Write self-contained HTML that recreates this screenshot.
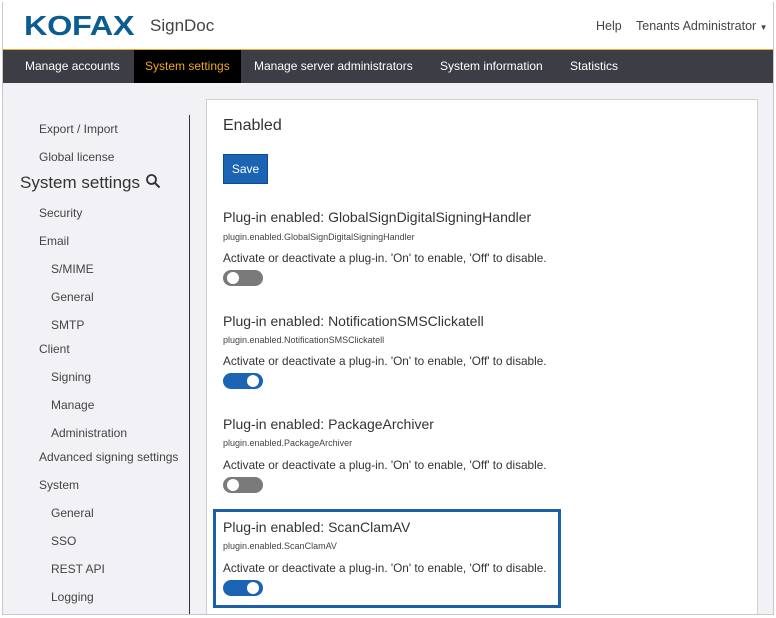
<!DOCTYPE html>
<html><head><style>
*{margin:0;padding:0;box-sizing:border-box}
body{width:776px;height:618px;background:#fff;font-family:"Liberation Sans","DejaVu Sans",sans-serif;position:relative;overflow:hidden;color:#333}
.frame{position:absolute;left:2px;top:2px;width:772px;height:613px;border:1px solid #c8c8c8;border-top:none;background:#f2f2f6;overflow:hidden}
.hdr{position:absolute;left:0;top:0;width:100%;height:47px;background:#fff}
.logo{position:absolute;left:21px;top:8px;font:900 28px "Liberation Sans",sans-serif;color:#0b5c91;letter-spacing:-0.3px;transform:scaleX(1.16);transform-origin:left}
.app{position:absolute;left:147px;top:14px;font-size:17px;color:#444}
.hr{position:absolute;top:17px;font-size:12.5px;color:#444}
.nav{position:absolute;left:0;top:47px;width:100%;height:34px;background:#3d3d45;border-top:1px solid #e3b22a}
.nav span{position:absolute;top:0;height:33px;line-height:33px;font-size:12px;color:#fff}
.nav .act{background:#000;color:#f0a623;padding:0 11px}
.side{position:absolute;font-size:12px;color:#444}
.vline{position:absolute;left:186px;top:113px;width:1px;height:510px;background:#333}
.panel{position:absolute;left:203px;top:97px;width:552px;height:530px;background:#fff;border:1px solid #d0d0d0}
.p{position:absolute;color:#333}
.t{font-size:14px}
.k{font-size:9px;color:#444}
.d{font-size:11.8px}
.tg{position:absolute;width:40px;height:16px;border-radius:8px}
.tg i{position:absolute;top:2px;width:12px;height:12px;border-radius:6px;background:#fff}
.off{background:#7a7a7a}.off i{left:4px}
.on{background:#1b64b4}.on i{left:24px}
.save{position:absolute;left:220px;top:152px;width:45px;height:30px;background:#1b64b4;border:1px solid #0f4c8e;color:#fff;font-size:12px;line-height:28px;text-align:center}
.hl{position:absolute;left:210px;top:507px;width:348px;height:99px;border:3px solid #1b5fa8}
</style></head><body>
<div class="frame">
<div class="hdr">
<div class="logo">KOFAX</div>
<div class="app">SignDoc</div>
<div class="hr" style="left:593px">Help</div>
<div class="hr" style="left:633px">Tenants Administrator <span style="font-size:8px">▼</span></div>
</div>
<div class="nav">
<span style="left:22px">Manage accounts</span>
<span class="act" style="left:131px">System settings</span>
<span style="left:251px">Manage server administrators</span>
<span style="left:437px">System information</span>
<span style="left:567px">Statistics</span>
</div>
<div class="side" style="left:36px;top:120px">Export / Import</div>
<div class="side" style="left:36px;top:148px">Global license</div>
<div class="side" style="left:17px;top:171px;font-size:17px;color:#333">System settings <svg width="16" height="16" viewBox="0 0 16 16" style="vertical-align:-1px"><circle cx="6.5" cy="6.5" r="4.5" fill="none" stroke="#333" stroke-width="1.8"/><path d="M10 10l4.5 4.5" stroke="#333" stroke-width="2"/></svg></div>
<div class="side" style="left:36px;top:204px">Security</div>
<div class="side" style="left:36px;top:232px">Email</div>
<div class="side" style="left:48px;top:260px">S/MIME</div>
<div class="side" style="left:48px;top:288px">General</div>
<div class="side" style="left:48px;top:316px">SMTP</div>
<div class="side" style="left:36px;top:340px">Client</div>
<div class="side" style="left:48px;top:368px">Signing</div>
<div class="side" style="left:48px;top:396px">Manage</div>
<div class="side" style="left:48px;top:424px">Administration</div>
<div class="side" style="left:36px;top:448px">Advanced signing settings</div>
<div class="side" style="left:36px;top:476px">System</div>
<div class="side" style="left:48px;top:504px">General</div>
<div class="side" style="left:48px;top:532px">SSO</div>
<div class="side" style="left:48px;top:560px">REST API</div>
<div class="side" style="left:48px;top:588px">Logging</div>
<div class="vline"></div>
<div class="panel"></div>
<div class="p" style="left:220px;top:115px;font-size:16px">Enabled</div>
<div class="save">Save</div>

<div class="p t" style="left:220px;top:207px">Plug-in enabled: GlobalSignDigitalSigningHandler</div>
<div class="p k" style="left:220px;top:230px">plugin.enabled.GlobalSignDigitalSigningHandler</div>
<div class="p d" style="left:220px;top:249px">Activate or deactivate a plug-in. 'On' to enable, 'Off' to disable.</div>
<div class="tg off" style="left:220px;top:268px"><i></i></div>

<div class="p t" style="left:220px;top:311px">Plug-in enabled: NotificationSMSClickatell</div>
<div class="p k" style="left:220px;top:333px">plugin.enabled.NotificationSMSClickatell</div>
<div class="p d" style="left:220px;top:352px">Activate or deactivate a plug-in. 'On' to enable, 'Off' to disable.</div>
<div class="tg on" style="left:220px;top:371px"><i></i></div>

<div class="p t" style="left:220px;top:414px">Plug-in enabled: PackageArchiver</div>
<div class="p k" style="left:220px;top:436px">plugin.enabled.PackageArchiver</div>
<div class="p d" style="left:220px;top:456px">Activate or deactivate a plug-in. 'On' to enable, 'Off' to disable.</div>
<div class="tg off" style="left:220px;top:475px"><i></i></div>

<div class="hl"></div>
<div class="p t" style="left:220px;top:517px">Plug-in enabled: ScanClamAV</div>
<div class="p k" style="left:220px;top:539px">plugin.enabled.ScanClamAV</div>
<div class="p d" style="left:220px;top:559px">Activate or deactivate a plug-in. 'On' to enable, 'Off' to disable.</div>
<div class="tg on" style="left:220px;top:578px"><i></i></div>
</div>
</body></html>
